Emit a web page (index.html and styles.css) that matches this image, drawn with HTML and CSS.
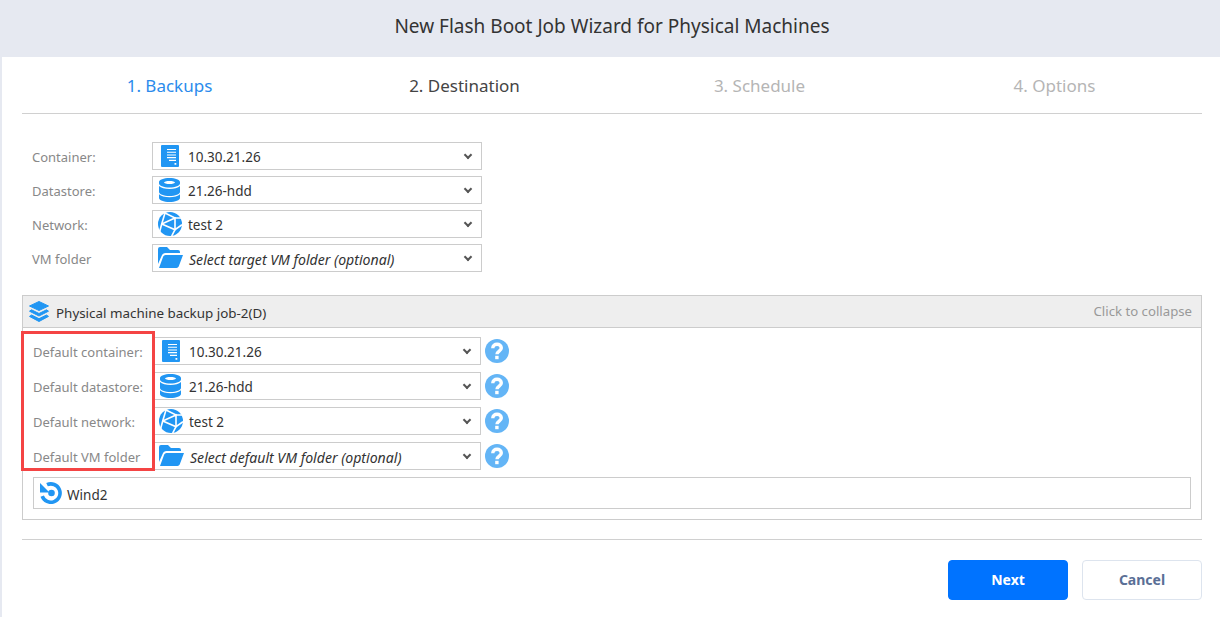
FILE: index.html
```html
<!DOCTYPE html>
<html lang="en">

<head>
    <meta charset="UTF-8">
    <title>New Flash Boot Job Wizard for Physical Machines</title>
    <link rel="stylesheet" href="styles.css">
</head>

<body>
    <svg class="icon-defs" width="0" height="0">
        <symbol id="i-server" viewBox="0 0 18 22">
            <path fill="#2196f3" d="M1 0h16a1 1 0 0 1 1 1v20a1 1 0 0 1-1 1H1a1 1 0 0 1-1-1V1a1 1 0 0 1 1-1z" />
            <path fill="#fff" d="M6 4h9v1.100H6zM6 6.700h9v1.100H6zM6 9.400h9v1.100H6zM6 12.100h9v1.100H6zM8 14.800h7v1.100H8zM13.500 18h1.800v1.800h-1.800z" />
        </symbol>
        <symbol id="i-db" viewBox="0 0 21 24">
            <path fill="#2196f3" fill-rule="evenodd" d="M10.500 0C16.300 0 21 1.700 21 4v1.500c0 2.300-4.700 4-10.500 4S0 7.800 0 5.500V4C0 1.700 4.700 0 10.500 0zm0 3C7.500 3 5 3.700 5 4.500S7.500 6 10.500 6 16 5.300 16 4.500 13.500 3 10.500 3z" />
            <path fill="#2196f3" d="M0 8c1.800 2 6 3 10.500 3S19.200 10 21 8v6c0 2.300-4.700 4-10.500 4S0 16.300 0 14z" />
            <path fill="#2196f3" d="M0 16.200c1.800 2 6 3 10.500 3s8.700-1 10.500-3V20c0 2.300-4.700 4-10.500 4S0 22.300 0 20z" />
        </symbol>
        <symbol id="i-globe" viewBox="0 0 24 24">
            <circle cx="12" cy="12" r="12" fill="#2196f3" />
            <g fill="none" stroke="#fff" stroke-width="1.600">
                <path d="M7 1 3.700 12 1.300 21" />
                <path d="M7 1 17 6h7" />
                <path d="M3.700 12 17 6v11.700L24 12.700" />
                <path d="M3.700 12 17 17.700 13.700 24" />
            </g>
        </symbol>
        <symbol id="i-folder" viewBox="0 0 25 21">
            <path fill="#2196f3" d="M2 0h7l3 3h8a2 2 0 0 1 2 2v1H7.500C5.500 6 4.500 7 3.800 8.500L0 17V2a2 2 0 0 1 2-2z" />
            <path fill="#2196f3" d="M7.500 8H25l-4.300 11.500A2.500 2.500 0 0 1 18.500 21H1l4.200-11.500A2.500 2.500 0 0 1 7.500 8z" />
        </symbol>
        <symbol id="i-stack" viewBox="0 0 20 21">
            <g fill="#2196f3" stroke="#2196f3" stroke-linejoin="round">
                <path d="M10 .5 19.500 5 10 9.500.5 5z" />
                <path d="M2.500 8.800 10 12.500l7.500-3.700 2 1.400L10 15 .5 10.200z" />
                <path d="M2.500 14 10 17.700l7.500-3.700 2 1.400L10 20.500.5 15.400z" />
            </g>
        </symbol>
        <symbol id="i-restore" viewBox="0 0 22 22">
            <path fill="none" stroke="#2196f3" stroke-width="3.600" d="M7 2.700a9.200 9.200 0 1 1-4.800 11.500" />
            <path fill="#2196f3" d="M0 1 9.500 10.500H0z" />
            <circle cx="11.500" cy="11" r="3.300" fill="#2196f3" />
        </symbol>
        <symbol id="i-help" viewBox="0 0 24 24">
            <circle cx="12" cy="12" r="12" fill="#64b5f6" />
            <path fill="none" stroke="#fff" stroke-width="3.400" d="M7.800 9.300c0-2.600 1.900-4 4.300-4s4.200 1.400 4.200 3.600c0 3.300-4.300 3-4.300 6.400" />
            <rect x="10.200" y="16.800" width="3.400" height="3.400" fill="#fff" />
        </symbol>
    </svg>

    <div class="wizard">
        <h1 class="wizard-title">New Flash Boot Job Wizard for Physical Machines</h1>
        <div class="wizard-body">
            <div class="steps">
                <div class="step step-done">1. Backups</div>
                <div class="step step-current">2. Destination</div>
                <div class="step">3. Schedule</div>
                <div class="step">4. Options</div>
            </div>

            <div class="form-rows">
                <div class="form-row">
                    <label>Container:</label>
                    <div class="select">
                        <svg class="select-icon"><use href="#i-server" x="4" y="2" width="18" height="22" /></svg>
                        <span>10.30.21.26</span>
                    </div>
                </div>
                <div class="form-row">
                    <label>Datastore:</label>
                    <div class="select">
                        <svg class="select-icon"><use href="#i-db" x="2" y="1" width="21" height="24" /></svg>
                        <span>21.26-hdd</span>
                    </div>
                </div>
                <div class="form-row">
                    <label>Network:</label>
                    <div class="select">
                        <svg class="select-icon"><use href="#i-globe" x="1" y="1" width="24" height="24" /></svg>
                        <span>test 2</span>
                    </div>
                </div>
                <div class="form-row">
                    <label>VM folder</label>
                    <div class="select">
                        <svg class="select-icon"><use href="#i-folder" x="1" y="2" width="25" height="21" /></svg>
                        <span class="placeholder">Select target VM folder (optional)</span>
                    </div>
                </div>
            </div>

            <div class="panel">
                <div class="panel-head">
                    <svg class="panel-icon"><use href="#i-stack" /></svg>
                    <span class="panel-name">Physical machine backup job-2(D)</span>
                    <span class="panel-toggle">Click to collapse</span>
                </div>
                <div class="panel-body">
                    <div class="highlight"></div>
                    <div class="form-row">
                        <label>Default container:</label>
                        <div class="select">
                            <svg class="select-icon"><use href="#i-server" x="4" y="2" width="18" height="22" /></svg>
                            <span>10.30.21.26</span>
                        </div>
                        <svg class="help"><use href="#i-help" /></svg>
                    </div>
                    <div class="form-row">
                        <label>Default datastore:</label>
                        <div class="select">
                            <svg class="select-icon"><use href="#i-db" x="2" y="1" width="21" height="24" /></svg>
                            <span>21.26-hdd</span>
                        </div>
                        <svg class="help"><use href="#i-help" /></svg>
                    </div>
                    <div class="form-row">
                        <label>Default network:</label>
                        <div class="select">
                            <svg class="select-icon"><use href="#i-globe" x="1" y="1" width="24" height="24" /></svg>
                            <span>test 2</span>
                        </div>
                        <svg class="help"><use href="#i-help" /></svg>
                    </div>
                    <div class="form-row">
                        <label>Default VM folder</label>
                        <div class="select">
                            <svg class="select-icon"><use href="#i-folder" x="1" y="2" width="25" height="21" /></svg>
                            <span class="placeholder">Select default VM folder (optional)</span>
                        </div>
                        <svg class="help"><use href="#i-help" /></svg>
                    </div>
                    <div class="machine">
                        <svg class="machine-icon"><use href="#i-restore" /></svg>
                        <span>Wind2</span>
                    </div>
                </div>
            </div>

            <div class="actions">
                <button class="btn btn-primary">Next</button>
                <button class="btn">Cancel</button>
            </div>
        </div>
    </div>
</body>

</html>
```

FILE: styles.css
```css
body {
    font-family: "Noto Sans", Arial, sans-serif;
    margin: 0;
    padding: 0;
    background-color: #fff;
    color: #333;
}

.icon-defs {
    display: block;
    height: 0;
}

.wizard {
    border-left: 2px solid #e6e9f1;
}

.wizard-title {
    margin: 0 0 0 -2px;
    height: 57px;
    padding-left: 4px;
    line-height: 53px;
    background-color: #e6e9f1;
    text-align: center;
    font-size: 19px;
    font-weight: 400;
}

.wizard-body {
    padding: 0 18px 17px 20px;
}

.steps {
    display: grid;
    grid-template-columns: repeat(4, 1fr);
    height: 56px;
    border-bottom: 1px solid #d0d0d0;
}

.step {
    text-align: center;
    line-height: 57px;
    font-size: 17px;
    color: #b5b5b5;
}

.step-done {
    color: #2b8bec;
}

.step-current {
    color: #444;
}

.form-rows {
    display: flex;
    flex-direction: column;
    gap: 6px;
    padding: 28px 10px 0;
}

.form-row {
    display: flex;
    align-items: center;
    font-size: 13.5px;
}

.form-row label {
    width: 120px;
    flex-shrink: 0;
    padding-top: 1px;
    color: #888;
    font-size: 13px;
}

.select {
    position: relative;
    box-sizing: border-box;
    display: flex;
    align-items: center;
    gap: 5px;
    width: 330px;
    height: 28px;
    padding-left: 4px;
    border: 1px solid #ccc;
}

.select span {
    padding-top: 2px;
}

.select::after {
    content: "";
    position: absolute;
    right: 10px;
    top: 9px;
    width: 4px;
    height: 4px;
    border-right: 2px solid #555;
    border-bottom: 2px solid #555;
    transform: rotate(45deg);
}

.select-icon {
    width: 26px;
    height: 26px;
    flex-shrink: 0;
}

.select .placeholder {
    margin-left: 1px;
    font-size: 14.1px;
    font-style: italic;
}

.panel {
    margin-top: 23px;
    border: 1px solid #ccc;
}

.panel-head {
    display: flex;
    align-items: center;
    height: 31px;
    padding: 0 9px 0 6px;
    background-color: #eee;
    border-bottom: 1px solid #ccc;
    font-size: 13.4px;
}

.panel-icon {
    width: 20px;
    height: 21px;
    margin-right: 7px;
}

.panel-name {
    padding-top: 2px;
}

.panel-toggle {
    margin-left: auto;
    padding-bottom: 2px;
    color: #999;
    font-size: 13.2px;
}

.panel-body {
    position: relative;
    display: flex;
    flex-direction: column;
    gap: 7px;
    padding: 9px 10px 10px;
}

.panel-body .select {
    width: 328px;
}

.highlight {
    position: absolute;
    z-index: 1;
    left: -2px;
    top: 3px;
    box-sizing: border-box;
    width: 134px;
    height: 140px;
    border: 3px solid #f44444;
}

.help {
    width: 24px;
    height: 24px;
    margin-left: 4px;
}

.machine {
    display: flex;
    align-items: center;
    box-sizing: border-box;
    height: 32px;
    padding-left: 6px;
    border: 1px solid #ccc;
    font-size: 13.5px;
}

.machine span {
    padding-top: 3px;
}

.machine-icon {
    width: 22px;
    height: 22px;
    margin-right: 5px;
}

.actions {
    display: flex;
    justify-content: flex-end;
    gap: 14px;
    margin-top: 19px;
    padding-top: 20px;
    border-top: 1px solid #d0d0d0;
}

.btn {
    width: 120px;
    height: 40px;
    padding-bottom: 3px;
    background-color: #fff;
    color: #5a6f96;
    border: 1px solid #dde4ee;
    border-radius: 4px;
    font-family: inherit;
    font-size: 14px;
    font-weight: 700;
}

.btn-primary {
    background-color: #0073ff;
    border-color: #0073ff;
    color: #fff;
}
```
